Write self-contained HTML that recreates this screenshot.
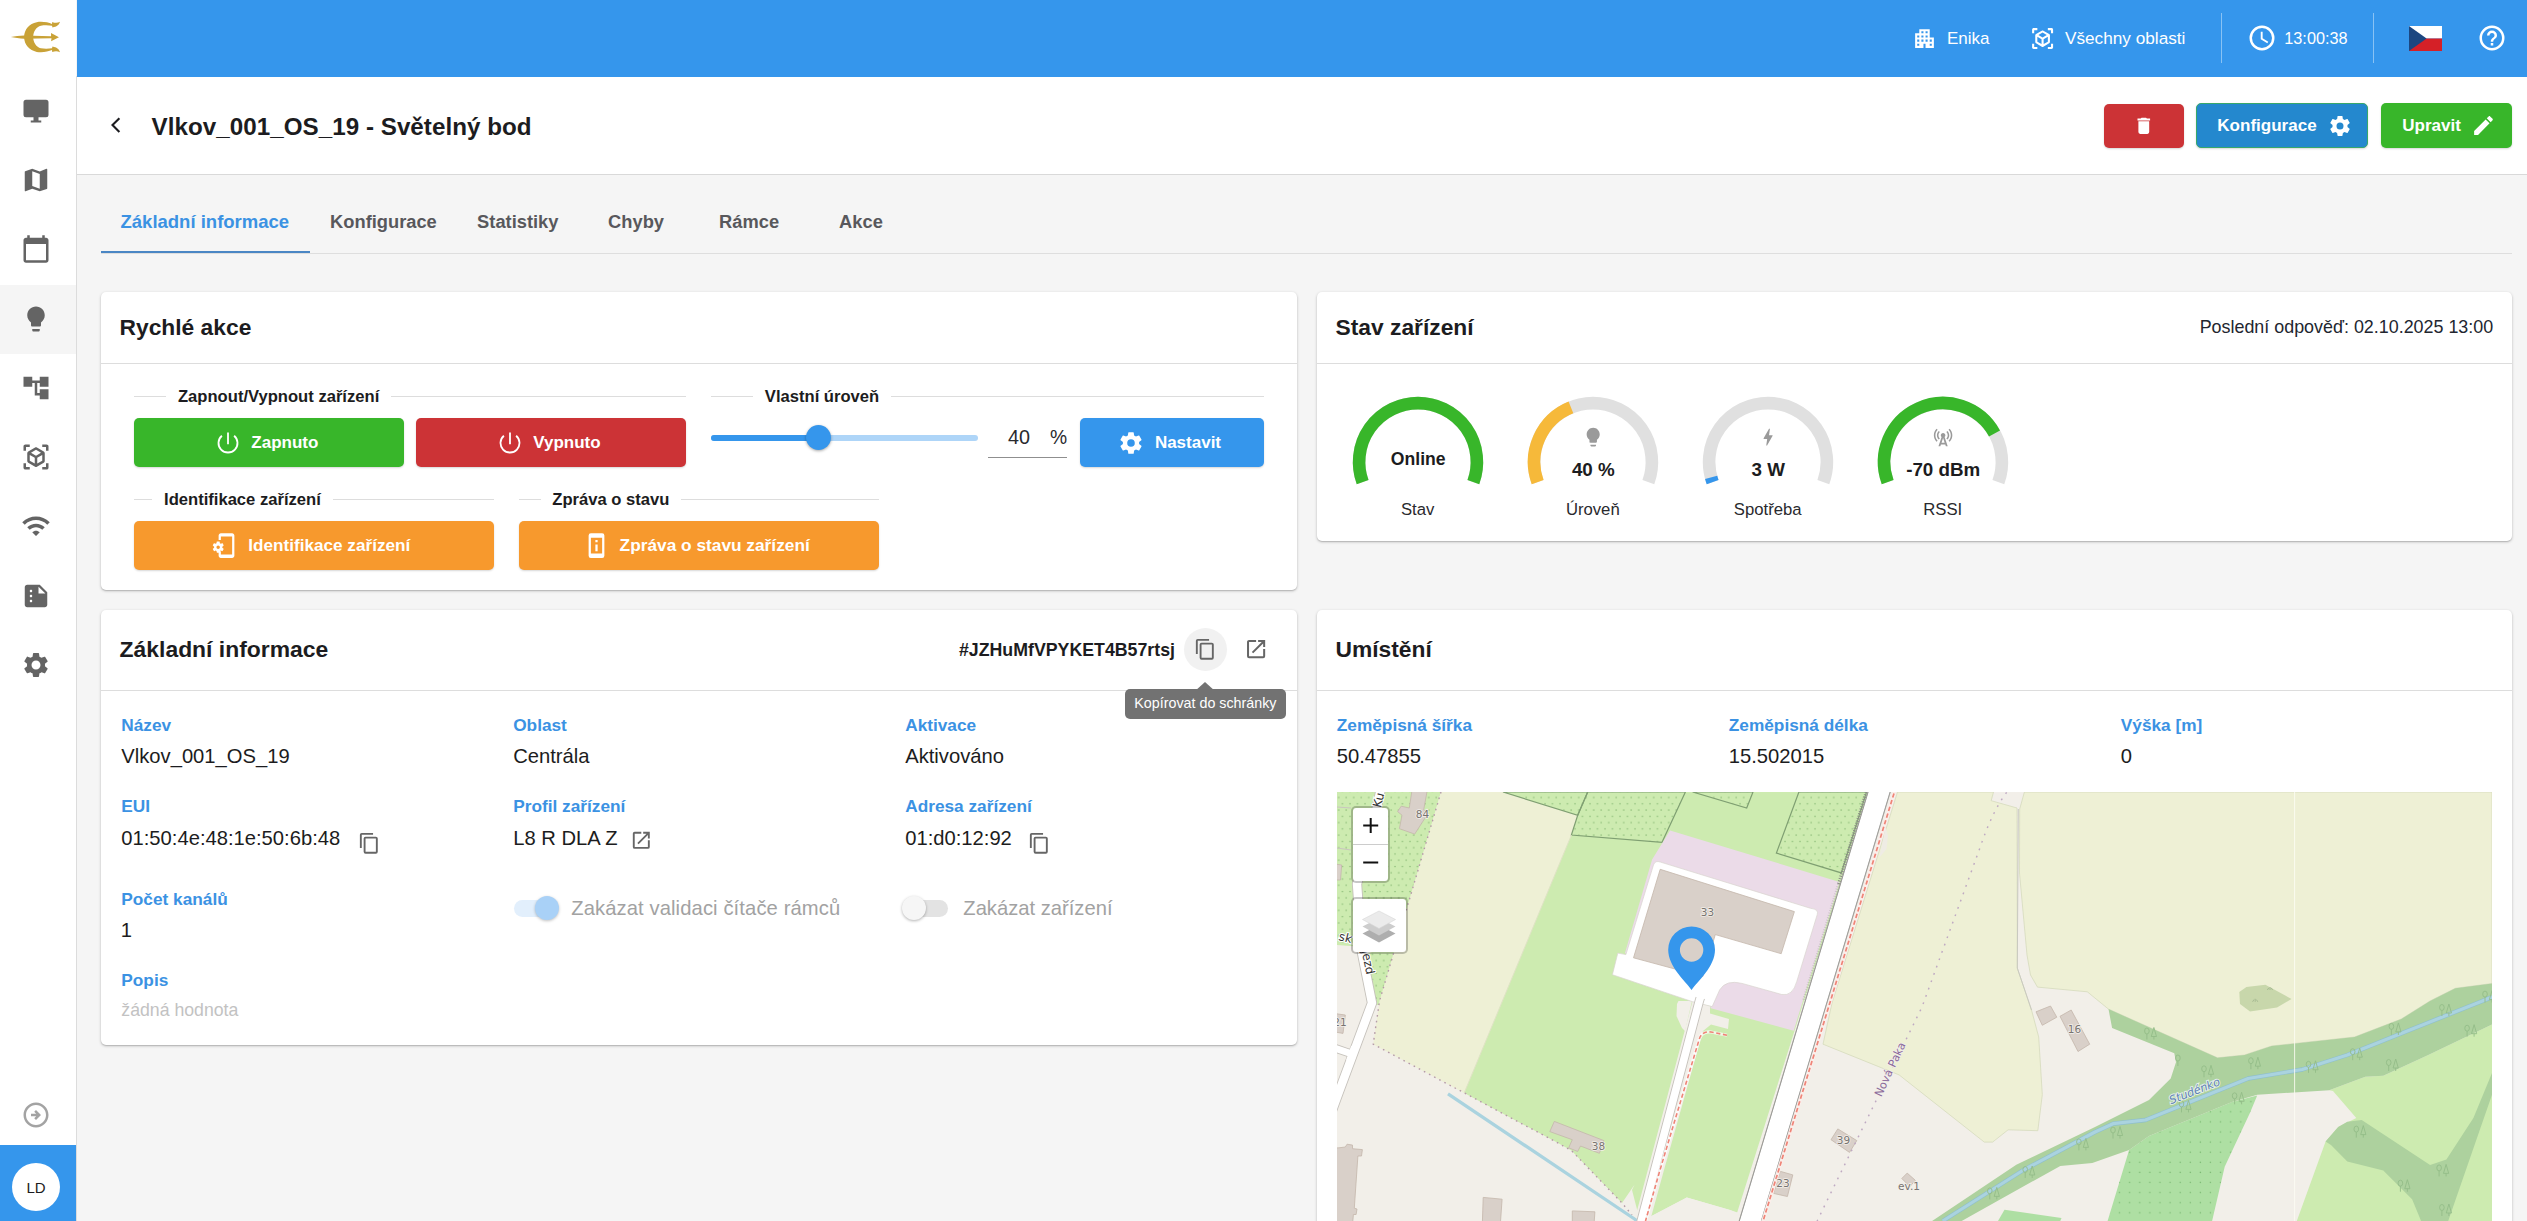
<!DOCTYPE html>
<html lang="cs">
<head>
<meta charset="utf-8">
<title>Vlkov_001_OS_19 - Světelný bod</title>
<style>
*{box-sizing:border-box;margin:0;padding:0}
html,body{width:2527px;height:1221px;overflow:hidden;background:#f5f5f5;font-family:"Liberation Sans",Arial,sans-serif;color:#1c1c20}
body{position:relative}
.t{position:absolute;white-space:nowrap;display:block}
.ic{position:absolute;display:block;overflow:visible}
.box{position:absolute}
.card{position:absolute;background:#fff;border-radius:5px;box-shadow:0 1px 3px rgba(0,0,0,.24),0 1px 1px rgba(0,0,0,.10)}
.hl{position:absolute;height:1px;background:#dddddd}
.btn{position:absolute;border-radius:5px;box-shadow:0 1px 2px rgba(0,0,0,.16)}
</style>
</head>
<body>

<div class="box" style="left:0;top:0;width:76px;height:1221px;background:#fff"></div>
<div class="box" style="left:76px;top:76px;width:1px;height:1145px;background:#dcdcdc"></div>
<div class="box" style="left:0;top:285px;width:76px;height:69px;background:#f5f5f5"></div>
<svg class="ic" style="left:4px;top:12px" width="68" height="50" viewBox="0 0 1661 1221"><g fill="#c9a237"><path d="M1368 238C1340 330 1290 350 1185 378L1172 335C1090 322 990 318 900 335C790 365 715 470 712 611C715 752 790 857 900 887C990 904 1090 900 1172 887L1185 844C1290 872 1340 892 1368 984C1310 952 1250 947 1178 979L1172 930C1080 972 930 994 800 974C620 937 495 802 490 611C495 420 620 285 800 248C930 228 1080 250 1172 292L1178 243C1250 275 1310 270 1368 238Z"/><path d="M168 611C260 590 380 580 495 574L1150 592L1148 512L1342 615L1150 712L1160 640L495 652C380 645 260 632 168 611Z"/></g></svg>
<svg class="ic" style="left:21.00px;top:95.90px" width="30" height="30" viewBox="0 0 24 24" ><path fill="#646464" d="M4 3H20A2 2 0 0 1 22 5V15A2 2 0 0 1 20 17H4A2 2 0 0 1 2 15V5A2 2 0 0 1 4 3ZM10 17H14V19.5H16.2V21.1H7.8V19.5H10Z"/></svg>
<svg class="ic" style="left:21.00px;top:165.14px" width="30" height="30" viewBox="0 0 24 24" ><path fill="#646464" d="M20.5 3l-.16.03L15 5.1 9 3 3.36 4.9c-.21.07-.36.25-.36.48V20.5c0 .28.22.5.5.5l.16-.03L9 18.9l6 2.1 5.64-1.9c.21-.07.36-.25.36-.48V3.5c0-.28-.22-.5-.5-.5zM15 19l-6-2.11V5l6 2.11V19z"/></svg>
<svg class="ic" style="left:21.00px;top:234.38px" width="30" height="30" viewBox="0 0 24 24" ><path fill="#646464" d="M20 3h-1V1h-2v2H7V1H5v2H4c-1.1 0-2 .9-2 2v16c0 1.1.9 2 2 2h16c1.1 0 2-.9 2-2V5c0-1.1-.9-2-2-2zm0 18H4V8h16v13z"/></svg>
<svg class="ic" style="left:21.00px;top:303.62px" width="30" height="30" viewBox="0 0 24 24" ><path fill="#646464" d="M9 21c0 .55.45 1 1 1h4c.55 0 1-.45 1-1v-1H9v1zm3-19C8.14 2 5 5.14 5 9c0 2.38 1.19 4.47 3 5.74V17c0 .55.45 1 1 1h6c.55 0 1-.45 1-1v-2.26c1.81-1.27 3-3.36 3-5.74 0-3.86-3.14-7-7-7z"/></svg>
<svg class="ic" style="left:21.00px;top:372.86px" width="30" height="30" viewBox="0 0 24 24" ><path fill="#646464" d="M22 11V3h-7v3H9V3H2v8h7V8h2v10h4v3h7v-8h-7v3h-2V8h2v3z"/></svg>
<svg class="ic" style="left:21.00px;top:442.10px" width="30" height="30" viewBox="0 0 24 24" ><path fill="#646464" d="M17,22V20H20V17H22V20.5C22,20.89 21.84,21.24 21.54,21.54C21.24,21.84 20.89,22 20.5,22H17M7,22H3.5C3.11,22 2.76,21.84 2.46,21.54C2.16,21.24 2,20.89 2,20.5V17H4V20H7V22M17,2H20.5C20.89,2 21.24,2.16 21.54,2.46C21.84,2.76 22,3.11 22,3.5V7H20V4H17V2M7,2V4H4V7H2V3.5C2,3.11 2.16,2.76 2.46,2.46C2.76,2.16 3.11,2 3.5,2H7M13,17.25L17,14.95V10.36L13,12.66V17.25M12,10.92L16,8.63L12,6.28L8,8.63L12,10.92M7,14.95L11,17.25V12.66L7,10.36V14.95M18.23,7.59C18.73,7.91 19,8.34 19,8.91V15.23C19,15.8 18.73,16.23 18.23,16.55L12.75,19.73C12.25,20.05 11.75,20.05 11.25,19.73L5.77,16.55C5.27,16.23 5,15.8 5,15.23V8.91C5,8.34 5.27,7.91 5.77,7.59L11.25,4.41C11.5,4.28 11.75,4.22 12,4.22C12.25,4.22 12.5,4.28 12.75,4.41L18.23,7.59Z"/></svg>
<svg class="ic" style="left:21.00px;top:511.34px" width="30" height="30" viewBox="0 0 24 24" ><path fill="#646464" d="M1 9l2 2c4.97-4.97 13.03-4.97 18 0l2-2C16.93 2.93 7.08 2.93 1 9zm8 8l3 3 3-3c-1.65-1.66-4.34-1.66-6 0zm-4-4l2 2c2.76-2.76 7.24-2.76 10 0l2-2C15.14 9.14 8.87 9.14 5 13z"/></svg>
<svg class="ic" style="left:21.00px;top:580.58px" width="30" height="30" viewBox="0 0 24 24" ><path fill="#646464" d="M15 3H5c-1.1 0-1.99.9-1.99 2L3 19c0 1.1.89 2 1.99 2H19c1.1 0 2-.9 2-2V9l-6-6zM8 17c-.55 0-1-.45-1-1s.45-1 1-1 1 .45 1 1-.45 1-1 1zm0-4c-.55 0-1-.45-1-1s.45-1 1-1 1 .45 1 1-.45 1-1 1zm0-4c-.55 0-1-.45-1-1s.45-1 1-1 1 .45 1 1-.45 1-1 1zm6 1V4.5l5.5 5.5H14z"/></svg>
<svg class="ic" style="left:21.00px;top:649.82px" width="30" height="30" viewBox="0 0 24 24" ><path fill="#646464" d="M19.14 12.94c.04-.3.06-.61.06-.94 0-.32-.02-.64-.07-.94l2.03-1.58c.18-.14.23-.41.12-.61l-1.92-3.32c-.12-.22-.37-.29-.59-.22l-2.39.96c-.5-.38-1.03-.7-1.62-.94l-.36-2.54c-.04-.24-.24-.41-.48-.41h-3.84c-.24 0-.43.17-.47.41l-.36 2.54c-.59.24-1.13.57-1.62.94l-2.39-.96c-.22-.08-.47 0-.59.22L2.74 8.87c-.12.21-.08.47.12.61l2.03 1.58c-.05.3-.09.63-.09.94s.02.64.07.94l-2.03 1.58c-.18.14-.23.41-.12.61l1.92 3.32c.12.22.37.29.59.22l2.39-.96c.5.38 1.03.7 1.62.94l.36 2.54c.05.24.24.41.48.41h3.84c.24 0 .44-.17.47-.41l.36-2.54c.59-.24 1.13-.56 1.62-.94l2.39.96c.22.08.47 0 .59-.22l1.92-3.32c.12-.22.07-.47-.12-.61l-2.01-1.58zM12 15.6c-1.98 0-3.6-1.62-3.6-3.6s1.62-3.6 3.6-3.6 3.6 1.62 3.6 3.6-1.62 3.6-3.6 3.6z"/></svg>
<svg class="ic" style="left:21.00px;top:1100.00px" width="30" height="30" viewBox="0 0 24 24" ><path fill="#a3a3a3" d="M22 12c0-5.52-4.48-10-10-10S2 6.48 2 12s4.48 10 10 10 10-4.48 10-10zM4 12c0-4.42 3.58-8 8-8s8 3.58 8 8-3.58 8-8 8-8-3.58-8-8zm12 0l-4 4-1.41-1.41L12.17 13H8v-2h4.17l-1.59-1.59L12 8l4 4z"/></svg>
<div class="box" style="left:0;top:1145px;width:76px;height:76px;background:#3596ec"></div>
<div class="box" style="left:12px;top:1163px;width:48px;height:48px;border-radius:50%;background:#fff"></div>
<span class="t" style="left:-364.0px;width:800px;text-align:center;top:1178px;font-size:15px;line-height:19px;font-weight:400;color:#1c1c20;">LD</span>
<div class="box" style="left:77px;top:0;width:2450px;height:76.5px;background:#3596ec"></div>
<svg class="ic" style="left:1912.10px;top:26.30px" width="25" height="25" viewBox="0 0 24 24" ><path fill="#fff" d="M17 11V3H7v4H3v14h8v-4h2v4h8V11h-4zM7 19H5v-2h2v2zm0-4H5v-2h2v2zm0-4H5V9h2v2zm4 4H9v-2h2v2zm0-4H9V9h2v2zm0-4H9V5h2v2zm4 8h-2v-2h2v2zm0-4h-2V9h2v2zm0-4h-2V5h2v2zm4 12h-2v-2h2v2zm0-4h-2v-2h2v2z"/></svg>
<span class="t" style="left:1947.0px;top:28px;font-size:17px;line-height:21px;font-weight:400;color:#fff;">Enika</span>
<svg class="ic" style="left:2029.50px;top:26.10px" width="25.2" height="25.2" viewBox="0 0 24 24" ><path fill="#fff" d="M17,22V20H20V17H22V20.5C22,20.89 21.84,21.24 21.54,21.54C21.24,21.84 20.89,22 20.5,22H17M7,22H3.5C3.11,22 2.76,21.84 2.46,21.54C2.16,21.24 2,20.89 2,20.5V17H4V20H7V22M17,2H20.5C20.89,2 21.24,2.16 21.54,2.46C21.84,2.76 22,3.11 22,3.5V7H20V4H17V2M7,2V4H4V7H2V3.5C2,3.11 2.16,2.76 2.46,2.46C2.76,2.16 3.11,2 3.5,2H7M13,17.25L17,14.95V10.36L13,12.66V17.25M12,10.92L16,8.63L12,6.28L8,8.63L12,10.92M7,14.95L11,17.25V12.66L7,10.36V14.95M18.23,7.59C18.73,7.91 19,8.34 19,8.91V15.23C19,15.8 18.73,16.23 18.23,16.55L12.75,19.73C12.25,20.05 11.75,20.05 11.25,19.73L5.77,16.55C5.27,16.23 5,15.8 5,15.23V8.91C5,8.34 5.27,7.91 5.77,7.59L11.25,4.41C11.5,4.28 11.75,4.22 12,4.22C12.25,4.22 12.5,4.28 12.75,4.41L18.23,7.59Z"/></svg>
<span class="t" style="left:2065.0px;top:27px;font-size:17.2px;line-height:22px;font-weight:400;color:#fff;">Všechny oblasti</span>
<div class="box" style="left:2221px;top:13px;width:1px;height:49.5px;background:rgba(255,255,255,.42)"></div>
<svg class="ic" style="left:2246.90px;top:22.80px" width="30" height="30" viewBox="0 0 24 24" ><path fill="#fff" d="M12,20A8,8 0 0,0 20,12A8,8 0 0,0 12,4A8,8 0 0,0 4,12A8,8 0 0,0 12,20M12,2A10,10 0 0,1 22,12A10,10 0 0,1 12,22C6.47,22 2,17.5 2,12A10,10 0 0,1 12,2M12.5,7V12.25L17,14.92L16.25,16.15L11,13V7H12.5Z"/></svg>
<span class="t" style="left:2284.3px;top:28px;font-size:16.25px;line-height:20px;font-weight:400;color:#fff;">13:00:38</span>
<div class="box" style="left:2373px;top:13px;width:1px;height:49.5px;background:rgba(255,255,255,.42)"></div>
<svg class="ic" style="left:2409px;top:26px" width="33" height="25" viewBox="0 0 33 25"><rect width="33" height="12.5" fill="#fff"/><rect y="12.5" width="33" height="12.5" fill="#d52027"/><path d="M0 0L17.6 12.5L0 25Z" fill="#1c4680"/></svg>
<svg class="ic" style="left:2477.00px;top:22.90px" width="30" height="30" viewBox="0 0 24 24" ><path fill="#fff" d="M11,18H13V16H11V18M12,2A10,10 0 0,0 2,12A10,10 0 0,0 12,22A10,10 0 0,0 22,12A10,10 0 0,0 12,2M12,20C7.59,20 4,16.41 4,12C4,7.59 7.59,4 12,4C16.41,4 20,7.59 20,12C20,16.41 16.41,20 12,20M12,6A4,4 0 0,0 8,10H10A2,2 0 0,1 12,8A2,2 0 0,1 14,10C14,12 11,11.75 11,15H13C13,12.75 16,12.5 16,10A4,4 0 0,0 12,6Z"/></svg>
<div class="box" style="left:77px;top:76.5px;width:2450px;height:97.5px;background:#fff"></div>
<div class="box" style="left:77px;top:174px;width:2450px;height:1px;background:#d9d9d9"></div>
<svg class="ic" style="left:105px;top:112px" width="22" height="26" viewBox="105 112 22 26"><path d="M119.4 118.2L112.5 125.1L119.4 132" fill="none" stroke="#1c1c20" stroke-width="2.1"/></svg>
<span class="t" style="left:151.6px;top:112px;font-size:24.2px;line-height:30px;font-weight:700;color:#1c1c20;letter-spacing:.03px">Vlkov_001_OS_19 - Světelný bod</span>
<div class="btn" style="left:2104px;top:104px;width:80px;height:44px;background:#cc3336"></div>
<svg class="ic" style="left:2133.35px;top:114.95px" width="21.6" height="21.6" viewBox="0 0 24 24" ><path fill="#fff" d="M19,4H15.5L14.5,3H9.5L8.5,4H5V6H19M6,19A2,2 0 0,0 8,21H16A2,2 0 0,0 18,19V7H6V19Z"/></svg>
<div class="btn" style="left:2196px;top:103px;width:172px;height:45px;background:#2488ce;border:1px solid #38a86b"></div>
<span class="t" style="left:2217.3px;top:115px;font-size:17.05px;line-height:21px;font-weight:700;color:#fff;">Konfigurace</span>
<svg class="ic" style="left:2327.90px;top:113.50px" width="24" height="24" viewBox="0 0 24 24" ><path fill="#fff" d="M12,15.5A3.5,3.5 0 0,1 8.5,12A3.5,3.5 0 0,1 12,8.5A3.5,3.5 0 0,1 15.5,12A3.5,3.5 0 0,1 12,15.5M19.43,12.97C19.47,12.65 19.5,12.33 19.5,12C19.5,11.67 19.47,11.34 19.43,11L21.54,9.37C21.73,9.22 21.78,8.95 21.66,8.73L19.66,5.27C19.54,5.05 19.27,4.96 19.05,5.05L16.56,6.05C16.04,5.66 15.5,5.32 14.87,5.07L14.5,2.42C14.46,2.18 14.25,2 14,2H10C9.75,2 9.54,2.18 9.5,2.42L9.13,5.07C8.5,5.32 7.96,5.66 7.44,6.05L4.95,5.05C4.73,4.96 4.46,5.05 4.34,5.27L2.34,8.73C2.21,8.95 2.27,9.22 2.46,9.37L4.57,11C4.53,11.34 4.5,11.67 4.5,12C4.5,12.33 4.53,12.65 4.57,12.97L2.46,14.63C2.27,14.78 2.21,15.05 2.34,15.27L4.34,18.73C4.46,18.95 4.73,19.03 4.95,18.95L7.44,17.94C7.96,18.34 8.5,18.68 9.13,18.93L9.5,21.58C9.54,21.82 9.75,22 10,22H14C14.25,22 14.46,21.82 14.5,21.58L14.87,18.93C15.5,18.67 16.04,18.34 16.56,17.94L19.05,18.95C19.27,19.03 19.54,18.95 19.66,18.73L21.66,15.27C21.78,15.05 21.73,14.78 21.54,14.63L19.43,12.97Z"/></svg>
<div class="btn" style="left:2381px;top:103px;width:131px;height:45px;background:#38b62a"></div>
<span class="t" style="left:2402.2px;top:115px;font-size:17.05px;line-height:21px;font-weight:700;color:#fff;">Upravit</span>
<svg class="ic" style="left:2470.90px;top:112.80px" width="25" height="25" viewBox="0 0 24 24" ><path fill="#fff" d="M20.71,7.04C21.1,6.65 21.1,6 20.71,5.63L18.37,3.29C18,2.9 17.35,2.9 16.96,3.29L15.12,5.12L18.87,8.87M3,17.25V21H6.75L17.81,9.93L14.06,6.18L3,17.25Z"/></svg>
<div class="box" style="left:101px;top:253px;width:2411px;height:1px;background:#dedede"></div>
<div class="box" style="left:101px;top:251px;width:209px;height:2px;background:#4a86c4"></div>
<span class="t" style="left:120.5px;top:210px;font-size:18.5px;line-height:23px;font-weight:700;color:#3b92e3;">Základní informace</span>
<span class="t" style="left:330.1px;top:210px;font-size:18.3px;line-height:23px;font-weight:700;color:#58585c;">Konfigurace</span>
<span class="t" style="left:477.1px;top:210px;font-size:18.3px;line-height:23px;font-weight:700;color:#58585c;">Statistiky</span>
<span class="t" style="left:608.1px;top:210px;font-size:18.3px;line-height:23px;font-weight:700;color:#58585c;">Chyby</span>
<span class="t" style="left:719.1px;top:210px;font-size:18.3px;line-height:23px;font-weight:700;color:#58585c;">Rámce</span>
<span class="t" style="left:839.1px;top:210px;font-size:18.3px;line-height:23px;font-weight:700;color:#58585c;">Akce</span>
<div class="card" style="left:101px;top:292px;width:1196px;height:298px"></div>
<div class="hl" style="left:101px;top:363px;width:1196px"></div>
<span class="t" style="left:119.5px;top:313px;font-size:22.8px;line-height:28px;font-weight:700;color:#1c1c20;">Rychlé akce</span>
<div class="hl" style="left:134px;top:396px;width:32px"></div>
<div class="hl" style="left:391.3px;top:396px;width:294.7px"></div>
<span class="t" style="left:-121.4px;width:800px;text-align:center;top:386px;font-size:16.6px;line-height:21px;font-weight:700;color:#1c1c20;">Zapnout/Vypnout zařízení</span>
<div class="hl" style="left:711px;top:396px;width:42px"></div>
<div class="hl" style="left:891px;top:396px;width:373px"></div>
<span class="t" style="left:422.0px;width:800px;text-align:center;top:386px;font-size:16.6px;line-height:21px;font-weight:700;color:#1c1c20;">Vlastní úroveň</span>
<div class="hl" style="left:134px;top:499px;width:18px"></div>
<div class="hl" style="left:332.8px;top:499px;width:161.2px"></div>
<span class="t" style="left:-157.6px;width:800px;text-align:center;top:489px;font-size:16.6px;line-height:21px;font-weight:700;color:#1c1c20;">Identifikace zařízení</span>
<div class="hl" style="left:519px;top:499px;width:21.5px"></div>
<div class="hl" style="left:681.3px;top:499px;width:197.70000000000005px"></div>
<span class="t" style="left:210.9px;width:800px;text-align:center;top:489px;font-size:16.6px;line-height:21px;font-weight:700;color:#1c1c20;">Zpráva o stavu</span>
<div class="btn" style="left:134px;top:418px;width:270px;height:48.5px;background:#38b62a"></div>
<svg class="ic" style="left:213.6px;top:428.6px" width="28" height="28" viewBox="213.6 428.6 28 28"><path d="M233.71 435.32A9.5 9.5 0 1 1 221.49 435.32" fill="none" stroke="#fff" stroke-width="1.8"/><path d="M227.6 432.0V443.8" fill="none" stroke="#fff" stroke-width="1.8"/></svg>
<span class="t" style="left:251.3px;top:432px;font-size:17px;line-height:21px;font-weight:700;color:#fff;">Zapnuto</span>
<div class="btn" style="left:416px;top:418px;width:270px;height:48.5px;background:#cc3336"></div>
<svg class="ic" style="left:495.6px;top:428.6px" width="28" height="28" viewBox="495.6 428.6 28 28"><path d="M515.71 435.32A9.5 9.5 0 1 1 503.49 435.32" fill="none" stroke="#fff" stroke-width="1.8"/><path d="M509.6 432.0V443.8" fill="none" stroke="#fff" stroke-width="1.8"/></svg>
<span class="t" style="left:533.3px;top:432px;font-size:17px;line-height:21px;font-weight:700;color:#fff;">Vypnuto</span>
<div class="box" style="left:711px;top:435px;width:267px;height:5.5px;border-radius:3px;background:#aed5f8"></div>
<div class="box" style="left:711px;top:435px;width:108px;height:5.5px;border-radius:3px;background:#3596ec"></div>
<div class="box" style="left:805.5px;top:425.3px;width:25px;height:25px;border-radius:50%;background:#3596ec;box-shadow:0 1px 3px rgba(0,0,0,.35)"></div>
<span class="t" style="left:1008.0px;top:425px;font-size:19.8px;line-height:25px;font-weight:400;color:#2a2a2e;">40</span>
<span class="t" style="left:1050.0px;top:426px;font-size:19.3px;line-height:24px;font-weight:400;color:#2a2a2e;">%</span>
<div class="box" style="left:988px;top:456.7px;width:79px;height:1px;background:#8f8f8f"></div>
<div class="btn" style="left:1080px;top:418px;width:184px;height:48.5px;background:#3596ec"></div>
<svg class="ic" style="left:1117.60px;top:429.60px" width="26" height="26" viewBox="0 0 24 24" ><path fill="#fff" d="M12,15.5A3.5,3.5 0 0,1 8.5,12A3.5,3.5 0 0,1 12,8.5A3.5,3.5 0 0,1 15.5,12A3.5,3.5 0 0,1 12,15.5M19.43,12.97C19.47,12.65 19.5,12.33 19.5,12C19.5,11.67 19.47,11.34 19.43,11L21.54,9.37C21.73,9.22 21.78,8.95 21.66,8.73L19.66,5.27C19.54,5.05 19.27,4.96 19.05,5.05L16.56,6.05C16.04,5.66 15.5,5.32 14.87,5.07L14.5,2.42C14.46,2.18 14.25,2 14,2H10C9.75,2 9.54,2.18 9.5,2.42L9.13,5.07C8.5,5.32 7.96,5.66 7.44,6.05L4.95,5.05C4.73,4.96 4.46,5.05 4.34,5.27L2.34,8.73C2.21,8.95 2.27,9.22 2.46,9.37L4.57,11C4.53,11.34 4.5,11.67 4.5,12C4.5,12.33 4.53,12.65 4.57,12.97L2.46,14.63C2.27,14.78 2.21,15.05 2.34,15.27L4.34,18.73C4.46,18.95 4.73,19.03 4.95,18.95L7.44,17.94C7.96,18.34 8.5,18.68 9.13,18.93L9.5,21.58C9.54,21.82 9.75,22 10,22H14C14.25,22 14.46,21.82 14.5,21.58L14.87,18.93C15.5,18.67 16.04,18.34 16.56,17.94L19.05,18.95C19.27,19.03 19.54,18.95 19.66,18.73L21.66,15.27C21.78,15.05 21.73,14.78 21.54,14.63L19.43,12.97Z"/></svg>
<span class="t" style="left:1154.9px;top:432px;font-size:17px;line-height:21px;font-weight:700;color:#fff;">Nastavit</span>
<div class="btn" style="left:134px;top:521px;width:360px;height:48.5px;background:#f7992d"></div>
<svg class="ic" style="left:212.70px;top:531.70px" width="27" height="27" viewBox="0 0 24 24" ><path fill="#fff" d="M17 1H7C5.9 1 5 1.9 5 3V7H7V4H17V20H7V17H5V21C5 22.1 5.9 23 7 23H17C18.1 23 19 22.1 19 21V3C19 1.9 18.1 1 17 1M8.2 13.3C8.2 13.2 8.3 13.1 8.3 13L9.4 12.1C9.5 12 9.5 11.9 9.5 11.7L8.5 10C8.4 9.9 8.3 9.8 8.2 9.9L6.9 10.4C6.7 10.2 6.4 10 6.1 9.9L5.9 8.6C5.9 8.5 5.8 8.4 5.6 8.4H3.6C3.5 8.4 3.4 8.5 3.3 8.6L3.1 9.9C2.8 10 2.6 10.2 2.3 10.4L1.1 9.9C1 9.9 .9 9.9 .8 10L-.2 11.7C-.2 11.8-.2 12-.1 12.1L1 13C1 13.1 1 13.3 1 13.5S1 13.8 1 13.9L-.1 14.8C-.2 14.9-.2 15-.2 15.2L.8 16.9C.9 17 1 17.1 1.1 17L2.4 16.5C2.6 16.7 2.9 16.9 3.2 17L3.4 18.3C3.4 18.4 3.5 18.5 3.7 18.5H5.7C5.8 18.5 5.9 18.4 6 18.3L6.2 17C6.5 16.9 6.7 16.7 7 16.5L8.2 17C8.3 17 8.4 17 8.5 16.9L9.5 15.2C9.5 15.1 9.5 14.9 9.4 14.8L8.3 13.9C8.3 13.8 8.3 13.6 8.3 13.5M4.6 15C3.8 15 3.1 14.3 3.1 13.5S3.8 12 4.6 12 6.1 12.7 6.1 13.5 5.4 15 4.6 15Z"/></svg>
<span class="t" style="left:248.3px;top:535px;font-size:17.15px;line-height:21px;font-weight:700;color:#fff;">Identifikace zařízení</span>
<div class="btn" style="left:519px;top:521px;width:360px;height:48.5px;background:#f7992d"></div>
<svg class="ic" style="left:582.90px;top:531.70px" width="27" height="27" viewBox="0 0 24 24" ><path fill="#fff" d="M13,11H11V17H13V11M13,7H11V9H13V7M17,1H7A2,2 0 0,0 5,3V21A2,2 0 0,0 7,23H17A2,2 0 0,0 19,21V3A2,2 0 0,0 17,1M17,19H7V5H17V19Z"/></svg>
<span class="t" style="left:619.6px;top:534px;font-size:17.3px;line-height:22px;font-weight:700;color:#fff;">Zpráva o stavu zařízení</span>
<div class="card" style="left:1317px;top:292px;width:1195px;height:249px"></div>
<div class="hl" style="left:1317px;top:363px;width:1195px"></div>
<span class="t" style="left:1335.5px;top:313px;font-size:22.8px;line-height:28px;font-weight:700;color:#1c1c20;">Stav zařízení</span>
<span class="t" style="left:1693.2px;width:800px;text-align:right;top:316px;font-size:17.9px;line-height:22px;font-weight:400;color:#22262f;">Poslední odpověď: 02.10.2025 13:00</span>
<svg class="ic" style="left:1348.2px;top:391.7px" width="140" height="100" viewBox="1348.2 391.7 140 100"><path d="M1362.85 481.84A58.9 58.9 0 1 1 1473.55 481.84" fill="none" stroke="#e0e0e0" stroke-width="12.6"/><path d="M1362.85 481.84A58.9 58.9 0 1 1 1473.55 481.84" fill="none" stroke="#38b62a" stroke-width="12.6"/></svg>
<svg class="ic" style="left:1523.3px;top:391.7px" width="140" height="100" viewBox="1523.3 391.7 140 100"><path d="M1537.95 481.84A58.9 58.9 0 1 1 1648.65 481.84" fill="none" stroke="#e0e0e0" stroke-width="12.6"/><path d="M1537.95 481.84A58.9 58.9 0 0 1 1571.24 407.09" fill="none" stroke="#f6b93a" stroke-width="12.6"/></svg>
<svg class="ic" style="left:1698.2px;top:391.7px" width="140" height="100" viewBox="1698.2 391.7 140 100"><path d="M1712.85 481.84A58.9 58.9 0 1 1 1823.55 481.84" fill="none" stroke="#e0e0e0" stroke-width="12.6"/><path d="M1712.85 481.84A58.9 58.9 0 0 1 1711.35 477.10" fill="none" stroke="#3596ec" stroke-width="12.6"/></svg>
<svg class="ic" style="left:1873.2px;top:391.7px" width="140" height="100" viewBox="1873.2 391.7 140 100"><path d="M1887.85 481.84A58.9 58.9 0 1 1 1998.55 481.84" fill="none" stroke="#e0e0e0" stroke-width="12.6"/><path d="M1887.85 481.84A58.9 58.9 0 0 1 1994.72 433.14" fill="none" stroke="#38b62a" stroke-width="12.6"/></svg>
<span class="t" style="left:1018.2px;width:800px;text-align:center;top:448px;font-size:17.6px;line-height:22px;font-weight:700;color:#1c1c20;">Online</span>
<span class="t" style="left:1193.3px;width:800px;text-align:center;top:458px;font-size:18.8px;line-height:24px;font-weight:700;color:#1c1c20;">40 %</span>
<span class="t" style="left:1368.2px;width:800px;text-align:center;top:458px;font-size:18.8px;line-height:24px;font-weight:700;color:#1c1c20;">3 W</span>
<span class="t" style="left:1543.2px;width:800px;text-align:center;top:458px;font-size:18.8px;line-height:24px;font-weight:700;color:#1c1c20;">-70 dBm</span>
<svg class="ic" style="left:1582.10px;top:425.80px" width="22.4" height="22.4" viewBox="0 0 24 24" ><path fill="#9a9a9a" d="M9 21c0 .55.45 1 1 1h4c.55 0 1-.45 1-1v-1H9v1zm3-19C8.14 2 5 5.14 5 9c0 2.38 1.19 4.47 3 5.74V17c0 .55.45 1 1 1h6c.55 0 1-.45 1-1v-2.26c1.81-1.27 3-3.36 3-5.74 0-3.86-3.14-7-7-7z"/></svg>
<svg class="ic" style="left:1757.10px;top:426.20px" width="22.2" height="22.2" viewBox="0 0 24 24" ><path fill="#9a9a9a" d="M11 21h-1l1-7H7.5c-.58 0-.57-.32-.38-.66.19-.34.05-.08.07-.12C8.48 10.94 10.42 7.54 13 3h1l-1 7h3.5c.49 0 .56.33.47.51l-.07.15C12.96 17.55 11 21 11 21z"/></svg>
<svg class="ic" style="left:1932.10px;top:425.90px" width="22.2" height="22.2" viewBox="0 0 24 24" ><path fill="#9a9a9a" d="M7.3 14.7l1.2-1.2c-1-1-1.5-2.3-1.5-3.5 0-1.3.5-2.6 1.5-3.5L7.3 5.3c-1.3 1.3-2 3-2 4.7s.7 3.4 2 4.7zM19.1 2.9l-1.2 1.2c1.6 1.6 2.4 3.8 2.4 5.9 0 2.1-.8 4.3-2.4 5.9l1.2 1.2c2-2 2.9-4.5 2.9-7.1 0-2.6-1-5.1-2.9-7.1zM6.1 4.1L4.9 2.9C3 4.9 2 7.4 2 10c0 2.6 1 5.1 2.9 7.1l1.2-1.2c-1.6-1.6-2.4-3.8-2.4-5.9 0-2.1.8-4.3 2.4-5.9zM16.7 14.7c1.3-1.3 2-3 2-4.7-.1-1.7-.7-3.4-2-4.7l-1.2 1.2c1 1 1.5 2.3 1.5 3.5 0 1.3-.5 2.6-1.5 3.5l1.2 1.2zM14.5 10c0-1.38-1.12-2.5-2.5-2.5S9.5 8.62 9.5 10c0 .76.34 1.42.87 1.88L7 22h2l.67-2h4.67l.66 2h2l-3.37-10.12c.53-.46.87-1.12.87-1.88zm-4.17 8L12 13l1.67 5h-3.34z"/></svg>
<span class="t" style="left:1017.7px;width:800px;text-align:center;top:499px;font-size:16.7px;line-height:21px;font-weight:400;color:#2a2a2e;">Stav</span>
<span class="t" style="left:1192.8px;width:800px;text-align:center;top:499px;font-size:16.7px;line-height:21px;font-weight:400;color:#2a2a2e;">Úroveň</span>
<span class="t" style="left:1367.7px;width:800px;text-align:center;top:499px;font-size:16.7px;line-height:21px;font-weight:400;color:#2a2a2e;">Spotřeba</span>
<span class="t" style="left:1542.7px;width:800px;text-align:center;top:499px;font-size:16.7px;line-height:21px;font-weight:400;color:#2a2a2e;">RSSI</span>
<div class="card" style="left:101px;top:610px;width:1196px;height:434.5px"></div>
<div class="hl" style="left:101px;top:690px;width:1196px"></div>
<span class="t" style="left:119.6px;top:635px;font-size:22.9px;line-height:29px;font-weight:700;color:#1c1c20;">Základní informace</span>
<span class="t" style="left:375.0px;width:800px;text-align:right;top:639px;font-size:17.75px;line-height:22px;font-weight:700;color:#1c1c20;">#JZHuMfVPYKET4B57rtsj</span>
<div class="box" style="left:1183.7px;top:627.8px;width:43.2px;height:43.2px;border-radius:50%;background:#f1f1f1"></div>
<svg class="ic" style="left:1193.80px;top:637.50px" width="22.6" height="22.6" viewBox="0 0 24 24" ><path fill="#666" d="M19,21H8V7H19M19,5H8A2,2 0 0,0 6,7V21A2,2 0 0,0 8,23H19A2,2 0 0,0 21,21V7A2,2 0 0,0 19,5M16,1H4A2,2 0 0,0 2,3V17H4V3H16V1Z"/></svg>
<svg class="ic" style="left:1244.20px;top:636.90px" width="24.2" height="24.2" viewBox="0 0 24 24" ><path fill="#666" d="M14,3V5H17.59L7.76,14.83L9.17,16.24L19,6.41V10H21V3M19,19H5V5H12V3H5C3.89,3 3,3.9 3,5V19A2,2 0 0,0 5,21H19A2,2 0 0,0 21,19V12H19V19Z"/></svg>
<span class="t" style="left:121.3px;top:714px;font-size:17.25px;line-height:22px;font-weight:700;color:#3b92e3;">Název</span>
<span class="t" style="left:121.3px;top:744px;font-size:20.2px;line-height:25px;font-weight:400;color:#1c1c20;">Vlkov_001_OS_19</span>
<span class="t" style="left:513.2px;top:714px;font-size:17.25px;line-height:22px;font-weight:700;color:#3b92e3;">Oblast</span>
<span class="t" style="left:513.2px;top:744px;font-size:20.2px;line-height:25px;font-weight:400;color:#1c1c20;">Centrála</span>
<span class="t" style="left:905.2px;top:714px;font-size:17.25px;line-height:22px;font-weight:700;color:#3b92e3;">Aktivace</span>
<span class="t" style="left:905.2px;top:744px;font-size:20.2px;line-height:25px;font-weight:400;color:#1c1c20;">Aktivováno</span>
<span class="t" style="left:121.3px;top:795px;font-size:17.25px;line-height:22px;font-weight:700;color:#3b92e3;">EUI</span>
<span class="t" style="left:121.3px;top:826px;font-size:20.2px;line-height:25px;font-weight:400;color:#1c1c20;">01:50:4e:48:1e:50:6b:48</span>
<svg class="ic" style="left:357.60px;top:831.70px" width="22.6" height="22.6" viewBox="0 0 24 24" ><path fill="#666" d="M19,21H8V7H19M19,5H8A2,2 0 0,0 6,7V21A2,2 0 0,0 8,23H19A2,2 0 0,0 21,21V7A2,2 0 0,0 19,5M16,1H4A2,2 0 0,0 2,3V17H4V3H16V1Z"/></svg>
<span class="t" style="left:513.2px;top:795px;font-size:17.25px;line-height:22px;font-weight:700;color:#3b92e3;">Profil zařízení</span>
<span class="t" style="left:513.2px;top:826px;font-size:20.2px;line-height:25px;font-weight:400;color:#1c1c20;">L8 R DLA Z</span>
<svg class="ic" style="left:630.10px;top:829.10px" width="22.6" height="22.6" viewBox="0 0 24 24" ><path fill="#666" d="M14,3V5H17.59L7.76,14.83L9.17,16.24L19,6.41V10H21V3M19,19H5V5H12V3H5C3.89,3 3,3.9 3,5V19A2,2 0 0,0 5,21H19A2,2 0 0,0 21,19V12H19V19Z"/></svg>
<span class="t" style="left:905.2px;top:795px;font-size:17.25px;line-height:22px;font-weight:700;color:#3b92e3;">Adresa zařízení</span>
<span class="t" style="left:905.2px;top:826px;font-size:20.2px;line-height:25px;font-weight:400;color:#1c1c20;">01:d0:12:92</span>
<svg class="ic" style="left:1027.70px;top:831.70px" width="22.6" height="22.6" viewBox="0 0 24 24" ><path fill="#666" d="M19,21H8V7H19M19,5H8A2,2 0 0,0 6,7V21A2,2 0 0,0 8,23H19A2,2 0 0,0 21,21V7A2,2 0 0,0 19,5M16,1H4A2,2 0 0,0 2,3V17H4V3H16V1Z"/></svg>
<span class="t" style="left:121.3px;top:888px;font-size:17.25px;line-height:22px;font-weight:700;color:#3b92e3;">Počet kanálů</span>
<span class="t" style="left:120.8px;top:918px;font-size:20.2px;line-height:25px;font-weight:400;color:#1c1c20;">1</span>
<span class="t" style="left:121.3px;top:969px;font-size:17.25px;line-height:22px;font-weight:700;color:#3b92e3;">Popis</span>
<span class="t" style="left:121.3px;top:999px;font-size:17.7px;line-height:22px;font-weight:400;color:#c2c2c2;">žádná hodnota</span>
<div class="box" style="left:514px;top:900.2px;width:43.5px;height:16.8px;border-radius:8.4px;background:#e2effc"></div>
<div class="box" style="left:535.2px;top:896.4px;width:24px;height:24px;border-radius:50%;background:#a9d1f7;box-shadow:0 1px 3px rgba(0,0,0,.25)"></div>
<span class="t" style="left:571.2px;top:896px;font-size:20.2px;line-height:25px;font-weight:400;color:#a2a2a2;letter-spacing:.11px">Zakázat validaci čítače rámců</span>
<div class="box" style="left:904.4px;top:900.2px;width:43.5px;height:16.8px;border-radius:8.4px;background:#e3e3e3"></div>
<div class="box" style="left:902.4px;top:896.4px;width:24px;height:24px;border-radius:50%;background:#f6f6f6;box-shadow:0 1px 3px rgba(0,0,0,.3)"></div>
<span class="t" style="left:963.3px;top:896px;font-size:20.2px;line-height:25px;font-weight:400;color:#a2a2a2;">Zakázat zařízení</span>
<div class="card" style="left:1317px;top:610px;width:1195px;height:640px"></div>
<div class="hl" style="left:1317px;top:690px;width:1195px"></div>
<span class="t" style="left:1335.5px;top:635px;font-size:22.8px;line-height:28px;font-weight:700;color:#1c1c20;">Umístění</span>
<span class="t" style="left:1336.8px;top:714px;font-size:17.25px;line-height:22px;font-weight:700;color:#3b92e3;">Zeměpisná šířka</span>
<span class="t" style="left:1336.8px;top:744px;font-size:20.2px;line-height:25px;font-weight:400;color:#1c1c20;">50.47855</span>
<span class="t" style="left:1728.8px;top:714px;font-size:17.25px;line-height:22px;font-weight:700;color:#3b92e3;">Zeměpisná délka</span>
<span class="t" style="left:1728.8px;top:744px;font-size:20.2px;line-height:25px;font-weight:400;color:#1c1c20;">15.502015</span>
<span class="t" style="left:2120.8px;top:714px;font-size:17.25px;line-height:22px;font-weight:700;color:#3b92e3;">Výška [m]</span>
<span class="t" style="left:2120.8px;top:744px;font-size:20.2px;line-height:25px;font-weight:400;color:#1c1c20;">0</span>
<svg class="ic" style="left:1337px;top:792px;overflow:hidden" width="1155" height="429" viewBox="1337 792 1155 429"><defs><pattern id="gd" width="7.5" height="12.54" patternUnits="userSpaceOnUse" patternTransform="translate(1592.7 796.5)"><rect x="0.4" y="0.4" width="1.25" height="1.25" fill="#86b873"/><rect x="4.15" y="6.67" width="1.25" height="1.25" fill="#86b873"/></pattern><pattern id="od" width="10.1" height="10.1" patternUnits="userSpaceOnUse" patternTransform="translate(2124.75 1147.25)"><rect x="4.3" y="4.3" width="1.3" height="1.3" fill="#7cba74"/></pattern><g id="tr" fill="none" stroke="#93bc88" stroke-width=".9"><ellipse cx="-3.6" cy="-5" rx="2.3" ry="3"/><path d="M-3.6-2V3.5M3.4 0.5V3.5M3.4-8.5L0.8 0.5H6Z"/></g></defs><rect x="1337" y="792" width="1155" height="429" fill="#f2efe9"/><polygon points="1337.0,792.0 1441.0,792.0 1380.0,1005.0 1372.0,1005.0 1364.0,947.0 1337.0,945.0" fill="#cdebb0" /><polygon points="1337.0,792.0 1441.0,792.0 1380.0,1005.0 1372.0,1005.0 1364.0,947.0 1337.0,945.0" fill="url(#gd)" /><polygon points="1441.0,792.0 1503.0,792.0 1577.7,815.2 1571.4,835.0 1464.2,1092.9 1373.2,1044.2 1379.5,1001.0" fill="#eef0d5" /><polygon points="1503.0,792.0 1870.0,792.0 1737.0,1213.0 1730.0,1210.0 1686.8,1197.4 1652.5,1215.4 1640.0,1221.0 1632.0,1190.0 1634.5,1184.8 1622.0,1203.0 1571.4,1150.5 1555.2,1141.5 1464.2,1092.9 1571.4,835.0 1577.7,815.2" fill="#cdebb0" /><polygon points="1503.0,792.0 1587.7,792.0 1577.7,815.2" fill="url(#gd)" stroke="#7f9f72" stroke-width="1.2"/><polygon points="1587.7,792.0 1685.4,792.0 1662.0,842.3 1571.4,835.0 1577.7,815.2" fill="url(#gd)" stroke="#7f9f72" stroke-width="1.2"/><polygon points="1692.6,792.0 1753.0,792.0 1746.7,808.0" fill="url(#gd)" stroke="#7f9f72" stroke-width="1.2"/><polygon points="1798.9,792.0 1866.5,792.0 1841.3,872.9 1776.4,853.1" fill="url(#gd)" stroke="#7f9f72" stroke-width="1.2"/><polyline points="1441.0,792.0 1379.5,1001.0 1373.2,1044.2 1464.2,1092.9 1555.2,1141.5 1571.4,1150.5 1622.0,1203.0 1632.0,1215.0" fill="none" stroke="#b59aa8" stroke-width="1.4" stroke-dasharray="1.6 4.2"/><polyline points="1571.4,835.0 1464.2,1092.9" fill="none" stroke="#dfe3c4" stroke-width="1" /><polygon points="1897.5,792.0 1993.5,792.0 1991.2,800.7 2017.0,808.0 2017.3,968.1 2031.5,1010.0 2038.7,1037.0 2042.3,1094.7 2037.8,1130.7 2008.1,1129.8 1992.6,1142.1 1984.3,1142.1 1899.1,1074.9 1823.0,1044.2 1832.0,1003.0" fill="#eef0d5" stroke="#d5dabc" stroke-width=".8"/><polygon points="2024.4,792.0 2492.0,792.0 2492.0,983.5 2455.3,988.3 2430.0,1001.0 2401.3,1019.0 2354.5,1037.0 2271.6,1046.0 2244.5,1055.0 2217.5,1057.8 2108.5,1009.1 2087.3,991.8 2037.5,987.1 2030.5,975.0 2027.0,955.0 2019.5,873.0 2019.7,809.0" fill="#eef0d5" stroke="#d5dabc" stroke-width=".8"/><polyline points="2018.3,809.0 2017.3,968.1 2031.5,1010.0" fill="none" stroke="#c9c9c0" stroke-width="1" /><polygon points="2239.3,992.0 2246.4,987.1 2265.4,984.7 2291.5,998.9 2277.0,1007.5 2250.0,1011.5 2240.0,1004.0" fill="#c8d7ab" /><path d="M2270 990v-3m-2.6 3l1.4-2.2m3.8 2.2l-1.4-2.2m-16 14v-3m-2.6 3l1.4-2.2m3.8 2.2l-1.4-2.2" stroke="#a3b78e" stroke-width=".9" fill="none"/><polygon points="2329.2,1090.2 2365.3,1076.7 2383.3,1075.8 2428.3,1055.0 2492.0,1024.4 2492.0,1221.0 2296.8,1221.0 2325.6,1141.5 2338.2,1127.1 2356.3,1118.1 2333.0,1091.0" fill="#cdebb0" /><polygon points="2257.2,1095.6 2250.0,1112.7 2224.7,1166.8 2212.1,1221.0 2107.6,1221.0 2129.1,1149.9 2149.0,1136.1 2232.0,1101.9" fill="#aedfa3" /><polygon points="2257.2,1095.6 2250.0,1112.7 2224.7,1166.8 2212.1,1221.0 2107.6,1221.0 2129.1,1149.9 2149.0,1136.1 2232.0,1101.9" fill="url(#od)" /><polygon points="2004.5,1209.8 2061.5,1218.1 2060.3,1221.0 1998.0,1221.0" fill="#aedfa3" /><polygon points="1932.1,1221.0 2016.3,1164.7 2095.0,1127.0 2149.0,1100.0 2170.7,1078.5 2176.0,1062.3 2174.3,1053.3 2112.1,1028.0 2108.5,1009.1 2217.5,1057.8 2244.5,1055.0 2271.6,1046.0 2354.5,1037.0 2401.3,1019.0 2430.0,1001.0 2455.3,988.3 2492.0,983.5 2492.0,1024.4 2428.3,1055.0 2383.3,1075.8 2365.3,1076.7 2329.2,1090.2 2257.2,1094.7 2232.0,1101.9 2149.0,1136.1 2129.1,1149.9 2092.3,1162.9 2060.3,1165.9 1961.7,1221.0" fill="#add19e" /><polygon points="2338.2,1127.1 2347.3,1121.7 2361.7,1119.9 2430.1,1165.0 2446.4,1159.6 2473.4,1118.1 2492.0,1073.1 2492.0,1094.7 2448.2,1221.0 2421.1,1221.0 2412.1,1199.2 2383.3,1170.4 2347.3,1161.4 2331.0,1145.1 2325.6,1141.5" fill="#add19e" /><polyline points="1942.7,1221.0 2023.5,1170.0 2095.0,1132.0 2113.0,1123.7 2145.5,1120.0 2248.2,1078.5 2302.2,1069.5 2347.3,1055.0 2482.4,1001.0 2492.0,997.0" fill="none" stroke="#8fbfcc" stroke-width="4.4" stroke-linejoin="round"/><polyline points="1942.7,1221.0 2023.5,1170.0 2095.0,1132.0 2113.0,1123.7 2145.5,1120.0 2248.2,1078.5 2302.2,1069.5 2347.3,1055.0 2482.4,1001.0 2492.0,997.0" fill="none" stroke="#aad3df" stroke-width="3.2" stroke-linejoin="round"/><use href="#tr" x="2207.6" y="1073.8"/><use href="#tr" x="2254.5" y="1065.7"/><use href="#tr" x="2312.1" y="1069.3"/><use href="#tr" x="2356.3" y="1056.7"/><use href="#tr" x="2392.3" y="1067.5"/><use href="#tr" x="2395" y="1031.4"/><use href="#tr" x="2445.5" y="1012.5"/><use href="#tr" x="2470.7" y="1033.2"/><use href="#tr" x="2238.2" y="1100.8"/><use href="#tr" x="2185.1" y="1108.9"/><use href="#tr" x="2116.6" y="1135.0"/><use href="#tr" x="2359.9" y="1134.1"/><use href="#tr" x="2442.7" y="1172.9"/><use href="#tr" x="2404" y="1188.2"/><use href="#tr" x="2445.5" y="1212.5"/><use href="#tr" x="2082.5" y="1146.9"/><use href="#tr" x="2028.8" y="1174.5"/><use href="#tr" x="1993.4" y="1195.9"/><use href="#tr" x="2488.6" y="999.1"/><use href="#tr" x="2150.5" y="1036.0"/><g fill="none" stroke="#93bc88" stroke-width=".9"><ellipse cx="2177.9" cy="1058" rx="2.3" ry="3"/><path d="M2177.9 1061V1066"/></g><polygon points="1670.1,830.5 1839.5,881.9 1793.7,1030.7 1710.8,1008.2 1709.0,1003.0 1625.0,953.0 1652.1,859.4" fill="#ebdbe8" /><polygon points="1692.6,1001.0 1710.0,1006.0 1710.0,1013.6 1729.0,1019.0 1728.0,1029.0 1711.0,1024.5 1703.0,1031.0 1664.0,1170.0 1650.0,1221.0 1634.3,1221.0" fill="#f2efe9" /><polygon points="1678.5,1001.0 1692.0,1001.0 1685.0,1031.0 1682.0,1028.0 1676.5,1016.0 1677.0,1004.0" fill="#f2efe9" /><ellipse cx="1680" cy="1222.5" rx="9" ry="4.6" fill="#aad3df"/><polygon points="1652.5,1215.4 1686.8,1197.4 1730.0,1210.0 1739.0,1213.0 1737.0,1221.0 1645.0,1221.0" fill="#f2efe9" /><polyline points="1448.0,1093.8 1634.5,1219.0 1640.0,1223.0" fill="none" stroke="#aad3df" stroke-width="3.3" /><path fill="#fff" stroke="#d8d4cf" stroke-width=".7" d="M1660.5 862.1L1810.6 908.3Q1819.3 909.3 1817.2 914.7L1796.8 981.4Q1792.6 996.5 1781.8 994.5L1742 983.4Q1726 979.5 1719.7 989.8L1712.2 1006.6L1692.5 1001.7L1612.4 974.7L1617.8 953.1L1625.9 954.6L1653.6 864.6Q1655.3 860.2 1660.5 862.1Z"/><polyline points="1702.8,990.0 1699.3,1001.0 1641.2,1221.0 1639.0,1230.0" fill="none" stroke="#c6c2bc" stroke-width="9.4" /><polyline points="1702.8,990.0 1699.3,1001.0 1641.2,1221.0 1639.0,1230.0" fill="none" stroke="#fff" stroke-width="7.6" /><polygon points="1694.0,985.0 1712.0,990.0 1709.0,1000.0 1692.0,996.0" fill="#fff" /><path d="M1727 1035.2L1711 1032Q1701.5 1030.8 1699 1040L1660 1170L1645.5 1221" fill="none" stroke="#fff" stroke-width="3.2" opacity=".7"/><path d="M1727 1035.2L1711 1032Q1701.5 1030.8 1699 1040L1660 1170L1645.5 1221" fill="none" stroke="#ef8477" stroke-width="1.6" stroke-dasharray="4.2 2.6"/><polygon points="1660.2,869.3 1794.4,911.6 1781.2,953.7 1715.3,934.6 1702.8,976.5 1633.5,957.8" fill="#d9d0c9" stroke="#c4b6ab" stroke-width=".8"/><polygon points="1412.0,790.0 1427.3,790.0 1423.7,809.8 1428.0,813.4 1414.7,834.1 1399.4,828.7 1402.0,815.2 1397.6,811.6 1401.2,806.2 1409.3,808.0" fill="#d9d0c9" stroke="#c4b6ab" stroke-width=".8"/><polygon points="1335.0,864.0 1341.7,865.0 1340.5,880.0 1335.0,880.0" fill="#d9d0c9" stroke="#c4b6ab" stroke-width=".8"/><polygon points="1554.3,1121.4 1603.9,1140.6 1599.4,1153.3 1580.5,1146.0 1577.7,1151.5 1568.7,1147.8 1572.3,1139.7 1549.8,1131.6" fill="#d9d0c9" stroke="#c4b6ab" stroke-width=".8"/><polygon points="1483.2,1197.4 1502.1,1199.2 1500.3,1225.0 1482.3,1225.0" fill="#d9d0c9" stroke="#c4b6ab" stroke-width=".8"/><polygon points="1572.3,1210.9 1594.9,1211.8 1594.0,1225.0 1572.3,1225.0" fill="#d9d0c9" stroke="#c4b6ab" stroke-width=".8"/><polygon points="1339.0,1147.8 1345.3,1147.0 1347.1,1144.2 1352.5,1145.1 1352.5,1148.7 1362.4,1149.6 1361.5,1156.0 1357.9,1156.0 1354.3,1208.2 1357.0,1209.0 1356.1,1214.5 1353.4,1214.5 1352.5,1225.0 1335.0,1225.0 1335.0,1148.0" fill="#d9d0c9" stroke="#c4b6ab" stroke-width=".8"/><polygon points="1335.0,1013.6 1345.3,1015.0 1343.0,1033.4 1335.0,1032.0" fill="#d9d0c9" stroke="#c4b6ab" stroke-width=".8"/><polygon points="1837.8,1128.9 1856.8,1140.6 1849.5,1152.4 1831.0,1139.7" fill="#d9d0c9" stroke="#c4b6ab" stroke-width=".8"/><polygon points="1780.2,1171.3 1792.8,1174.9 1787.4,1196.5 1773.5,1193.4" fill="#d9d0c9" stroke="#c4b6ab" stroke-width=".8"/><polygon points="1907.2,1173.1 1915.3,1180.3 1909.9,1186.6 1901.8,1178.5" fill="#d9d0c9" stroke="#c4b6ab" stroke-width=".8"/><polygon points="2036.0,1011.8 2050.5,1006.0 2056.8,1017.2 2042.3,1025.3" fill="#d9d0c9" stroke="#c4b6ab" stroke-width=".8"/><polygon points="2060.0,1016.3 2071.2,1010.0 2089.7,1044.2 2078.0,1051.5" fill="#d9d0c9" stroke="#c4b6ab" stroke-width=".8"/><polyline points="1381.0,788.0 1372.0,830.0 1357.0,884.0 1362.0,953.0 1372.0,1003.0 1337.0,1097.0 1330.0,1116.0" fill="none" stroke="#c6c2bc" stroke-width="10.2" stroke-linejoin="round"/><polyline points="1381.0,788.0 1372.0,830.0 1357.0,884.0 1362.0,953.0 1372.0,1003.0 1337.0,1097.0 1330.0,1116.0" fill="none" stroke="#fff" stroke-width="8.4" stroke-linejoin="round"/><polyline points="1352.0,1054.0 1330.0,1046.5" fill="none" stroke="#c6c2bc" stroke-width="8.6" /><polyline points="1352.0,1054.0 1330.0,1046.5" fill="none" stroke="#fff" stroke-width="6.8" /><polyline points="1354.5,1047.0 1349.5,1061.0" fill="none" stroke="#fff" stroke-width="7" /><polyline points="1337.0,807.0 1351.0,808.0" fill="none" stroke="#c9c5bf" stroke-width="1" /><polyline points="1337.0,848.0 1351.0,850.0" fill="none" stroke="#c9c5bf" stroke-width="1" /><polyline points="1882.7,780.0 1746.1,1235.0" fill="none" stroke="#bfbbb6" stroke-width="22.4" /><polyline points="1882.7,780.0 1746.1,1235.0" fill="none" stroke="#fff" stroke-width="20.6" /><polyline points="1869.8,780.0 1838.6,884.0" fill="none" stroke="#8c8e86" stroke-width="3.2" stroke-dasharray="1 1.5"/><polyline points="1838.6,884.0 1803.7,1000.0" fill="none" stroke="#8c8e86" stroke-width="3.0" stroke-dasharray="1 1.5" opacity=".3"/><polyline points="1871.7,780.0 1735.1,1235.0" fill="none" stroke="#9a9a96" stroke-width="1.0" /><polyline points="1893.7,780.0 1757.1,1235.0" fill="none" stroke="#9a9a96" stroke-width="0.9" /><polyline points="1898.1,780.0 1758.8,1235.0" fill="none" stroke="#fbeeea" stroke-width="3.6" /><polyline points="1898.1,780.0 1758.8,1235.0" fill="none" stroke="#ef8477" stroke-width="1.7" stroke-dasharray="4.4 2.6"/><polygon points="1885.5,826.0 1888.0,836.0 1886.5,849.0 1879.0,858.0 1883.0,840.0" fill="#efece4" /><path d="M2006.6 792.4Q1992 812 1980 847.7L1922 1007L1817.1 1221" fill="none" stroke="#bfa9c2" stroke-width="1.45" stroke-dasharray="1.8 6"/><rect x="2294.1" y="792" width="1" height="429" fill="#fbfbf4" opacity=".85"/><text x="1707.5" y="916" font-size="10.5" text-anchor="middle" fill="#777370" stroke="#f3efea" stroke-width="1.6" paint-order="stroke" style="font-family:'DejaVu Sans','Liberation Sans',sans-serif">33</text><text x="1422.5" y="817.5" font-size="10.5" text-anchor="middle" fill="#777370" stroke="#f3efea" stroke-width="1.6" paint-order="stroke" style="font-family:'DejaVu Sans','Liberation Sans',sans-serif">84</text><text x="1598.5" y="1150" font-size="10.5" text-anchor="middle" fill="#777370" stroke="#f3efea" stroke-width="1.6" paint-order="stroke" style="font-family:'DejaVu Sans','Liberation Sans',sans-serif">38</text><text x="1843.5" y="1143.5" font-size="10.5" text-anchor="middle" fill="#777370" stroke="#f3efea" stroke-width="1.6" paint-order="stroke" style="font-family:'DejaVu Sans','Liberation Sans',sans-serif">39</text><text x="1783" y="1187" font-size="10.5" text-anchor="middle" fill="#777370" stroke="#f3efea" stroke-width="1.6" paint-order="stroke" style="font-family:'DejaVu Sans','Liberation Sans',sans-serif">23</text><text x="2074.5" y="1033" font-size="10.5" text-anchor="middle" fill="#777370" stroke="#f3efea" stroke-width="1.6" paint-order="stroke" style="font-family:'DejaVu Sans','Liberation Sans',sans-serif">16</text><text x="1909" y="1189.5" font-size="10.5" text-anchor="middle" fill="#777370" stroke="#f3efea" stroke-width="1.6" paint-order="stroke" style="font-family:'DejaVu Sans','Liberation Sans',sans-serif">ev.1</text><text x="1340" y="1026" font-size="10.5" text-anchor="middle" fill="#777370" stroke="#f3efea" stroke-width="1.6" paint-order="stroke" style="font-family:'DejaVu Sans','Liberation Sans',sans-serif">21</text><text transform="translate(1893.5 1071) rotate(-65)" font-size="11.2" text-anchor="middle" fill="#8a6a9a" stroke="#f3efea" stroke-width="1.4" paint-order="stroke" style="font-family:'DejaVu Sans','Liberation Sans',sans-serif">Nová Paka</text><text transform="translate(2196 1094.5) rotate(-21.5)" font-size="11.3" font-style="italic" text-anchor="middle" fill="#5d82b3" stroke="#e8f1ec" stroke-width="1.8" paint-order="stroke" style="font-family:'DejaVu Sans','Liberation Sans',sans-serif">Studénko</text><text transform="translate(1382.5 801) rotate(-76)" font-size="12" text-anchor="middle" fill="#333" stroke="#fff" stroke-width="2" paint-order="stroke" style="font-family:'DejaVu Sans','Liberation Sans',sans-serif">Ku</text><text transform="translate(1344.5 941.5) rotate(14)" font-size="12" text-anchor="middle" fill="#333" stroke="#fff" stroke-width="2" paint-order="stroke" style="font-family:'DejaVu Sans','Liberation Sans',sans-serif">sk</text><text transform="translate(1364 963) rotate(78)" font-size="12" text-anchor="middle" fill="#333" stroke="#fff" stroke-width="2" paint-order="stroke" style="font-family:'DejaVu Sans','Liberation Sans',sans-serif">jezd</text></svg>
<div class="box" style="left:1350.5px;top:805.5px;width:39.6px;height:77.2px;border-radius:5px;background:#fff;border:2px solid rgba(0,0,0,.22);background-clip:padding-box"></div>
<div class="box" style="left:1352.5px;top:843.6px;width:35.6px;height:1px;background:#ccc"></div>
<svg class="ic" style="left:1352.5px;top:807.5px" width="36" height="74" viewBox="0 0 36 74"><path d="M10.2 17.6H25.2M17.7 10.1V25.1M10.2 54.6H25.2" stroke="#111" stroke-width="2" fill="none"/></svg>
<div class="box" style="left:1350.5px;top:896.8px;width:57px;height:57px;border-radius:5px;background:#fff;border:2px solid rgba(0,0,0,.22);background-clip:padding-box"></div>
<svg class="ic" style="left:1361.5px;top:909.5px" width="34" height="33" viewBox="0 0 34 33"><path d="M17 15L33.5 23.5L17 32.5L0.5 23.5Z" fill="#aeaeae"/><path d="M17 8L33.5 16.5L17 25.5L0.5 16.5Z" fill="#cdcdcd"/><path d="M17 1L33.5 9.5L17 18.5L0.5 9.5Z" fill="#ebebeb" stroke="#d6d6d6" stroke-width=".6"/></svg>
<svg class="ic" style="left:1664px;top:922px" width="56" height="72" viewBox="1664 922 56 72"><path fill-rule="evenodd" fill="#3596ec" d="M1691.6 990C1685.2 981 1668.2 966.5 1668.2 949.8A23.4 23.4 0 0 1 1715 949.8C1715 966.5 1698 981 1691.6 990ZM1691.6 938.3A11.7 11.7 0 1 0 1691.6 961.7A11.7 11.7 0 1 0 1691.6 938.3Z"/></svg>
<div class="box" style="left:1125.3px;top:689.2px;width:160.8px;height:29.6px;border-radius:5px;background:#727272"></div>
<svg class="ic" style="left:1197.3px;top:682.4px" width="16" height="8" viewBox="0 0 16 8"><path d="M0 7.2L8 0L16 7.2Z" fill="#727272"/></svg>
<span class="t" style="left:805.4px;width:800px;text-align:center;top:694px;font-size:14.3px;line-height:18px;font-weight:400;color:#fff;">Kopírovat do schránky</span>
</body>
</html>
